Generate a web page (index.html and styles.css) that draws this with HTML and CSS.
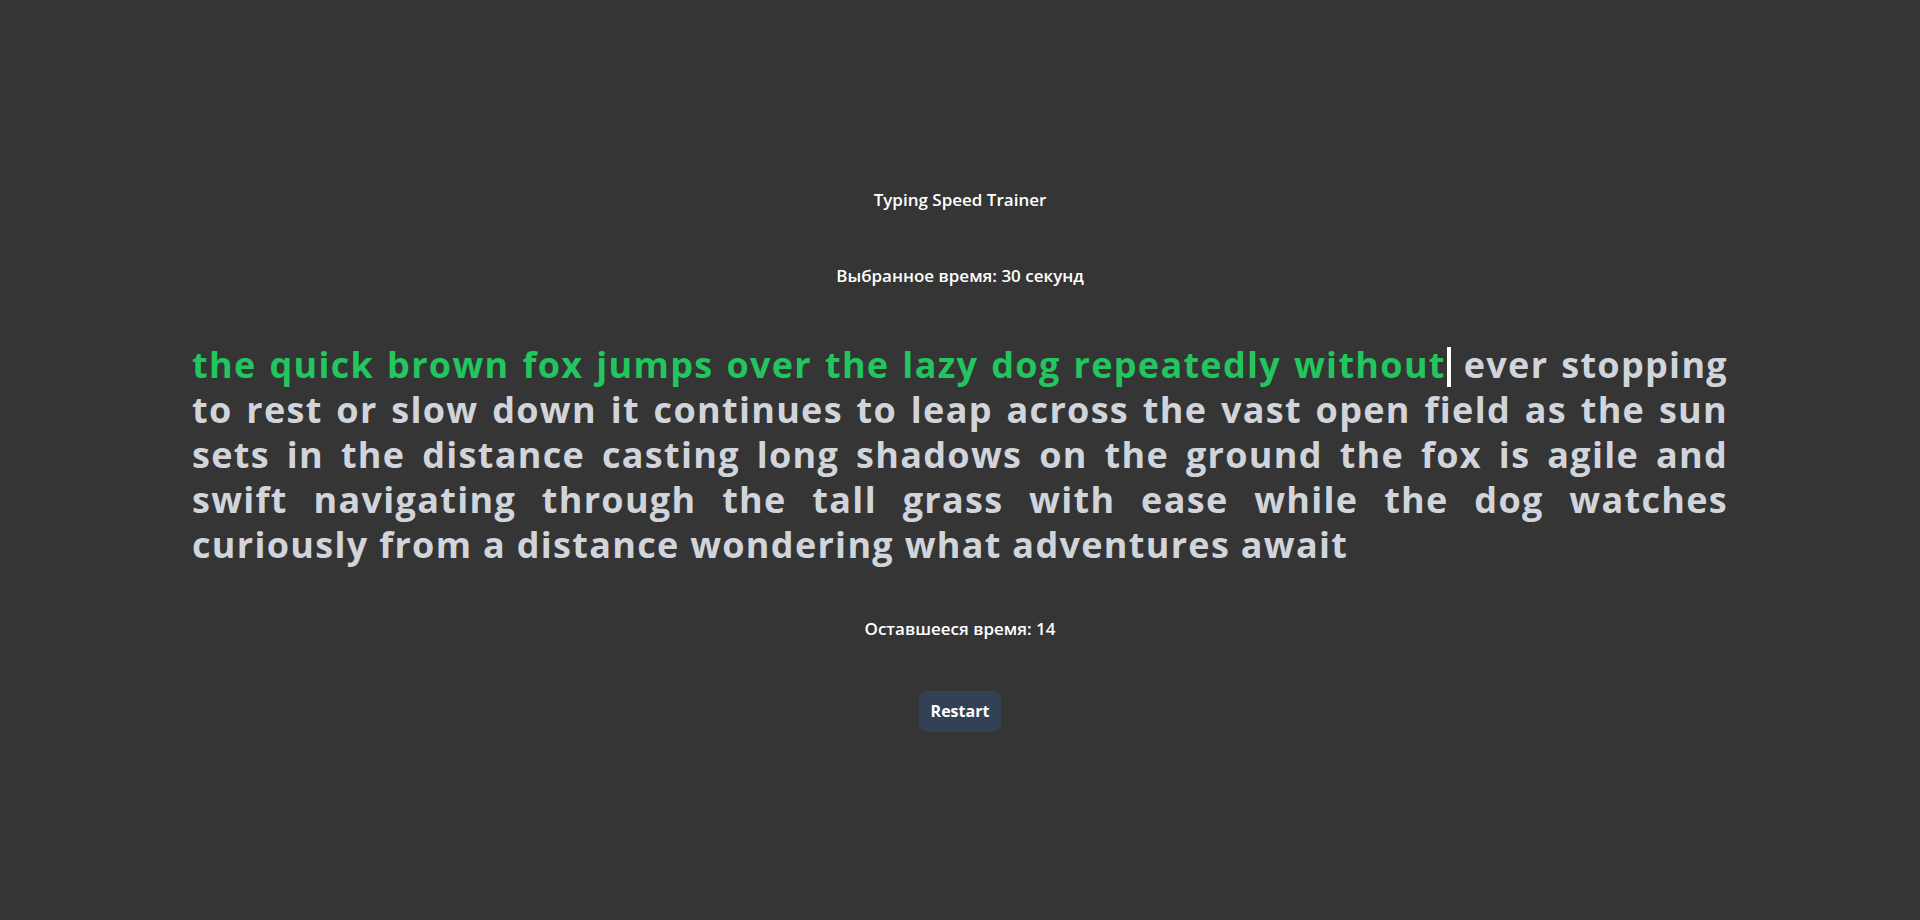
FILE: index.html
```html
<!DOCTYPE html>
<html lang="ru">
<head>
<meta charset="utf-8">
<title>Typing Speed Trainer</title>
<link rel="stylesheet" href="styles.css">
</head>
<body>
<main class="app">
  <h1 class="title">Typing Speed Trainer</h1>
  <p class="info">Выбранное время: 30 секунд</p>
  <div class="text"><span class="typed">the quick brown fox jumps over the lazy dog repeatedly without</span><span class="cursor"></span> ever stopping to rest or slow down it continues to leap across the vast open field as the sun sets in the distance casting long shadows on the ground the fox is agile and swift navigating through the tall grass with ease while the dog watches curiously from a distance wondering what adventures await</div>
  <p class="timer">Оставшееся время: 14</p>
  <button class="restart" type="button">Restart</button>
</main>
</body>
</html>
```

FILE: styles.css
```css
html, body {
  margin: 0;
  padding: 0;
  height: 100%;
}
body {
  background: #353535;
  color: #ffffff;
  font-family: "Open Sans", "Noto Sans", sans-serif;
  overflow: hidden;
}
.app {
  display: flex;
  flex-direction: column;
  align-items: center;
  padding-top: 186px;
}
.title {
  margin: 0;
  font-size: 17px;
  line-height: 28px;
  font-weight: 600;
}
.info {
  margin: 48px 0 0;
  font-size: 17px;
  line-height: 28px;
  font-weight: 600;
}
.text {
  margin-top: 52px;
  width: 1536px;
  text-align: justify;
  font-size: 36px;
  line-height: 45px;
  font-weight: 700;
  letter-spacing: 1.3px;
  color: #d1d5db;
}
.typed {
  color: #22c55e;
}
.cursor {
  display: inline-block;
  width: 4px;
  height: 40px;
  margin-left: 1px;
  background: #ffffff;
  vertical-align: -9px;
}
.timer {
  margin: 48px 0 0;
  font-size: 17px;
  line-height: 28px;
  font-weight: 600;
}
.restart {
  margin-top: 48px;
  padding: 8px 12px;
  border: none;
  border-radius: 8px;
  background: #334155;
  color: #ffffff;
  font-family: inherit;
  font-size: 16px;
  line-height: 25px;
  font-weight: 700;
}
```
